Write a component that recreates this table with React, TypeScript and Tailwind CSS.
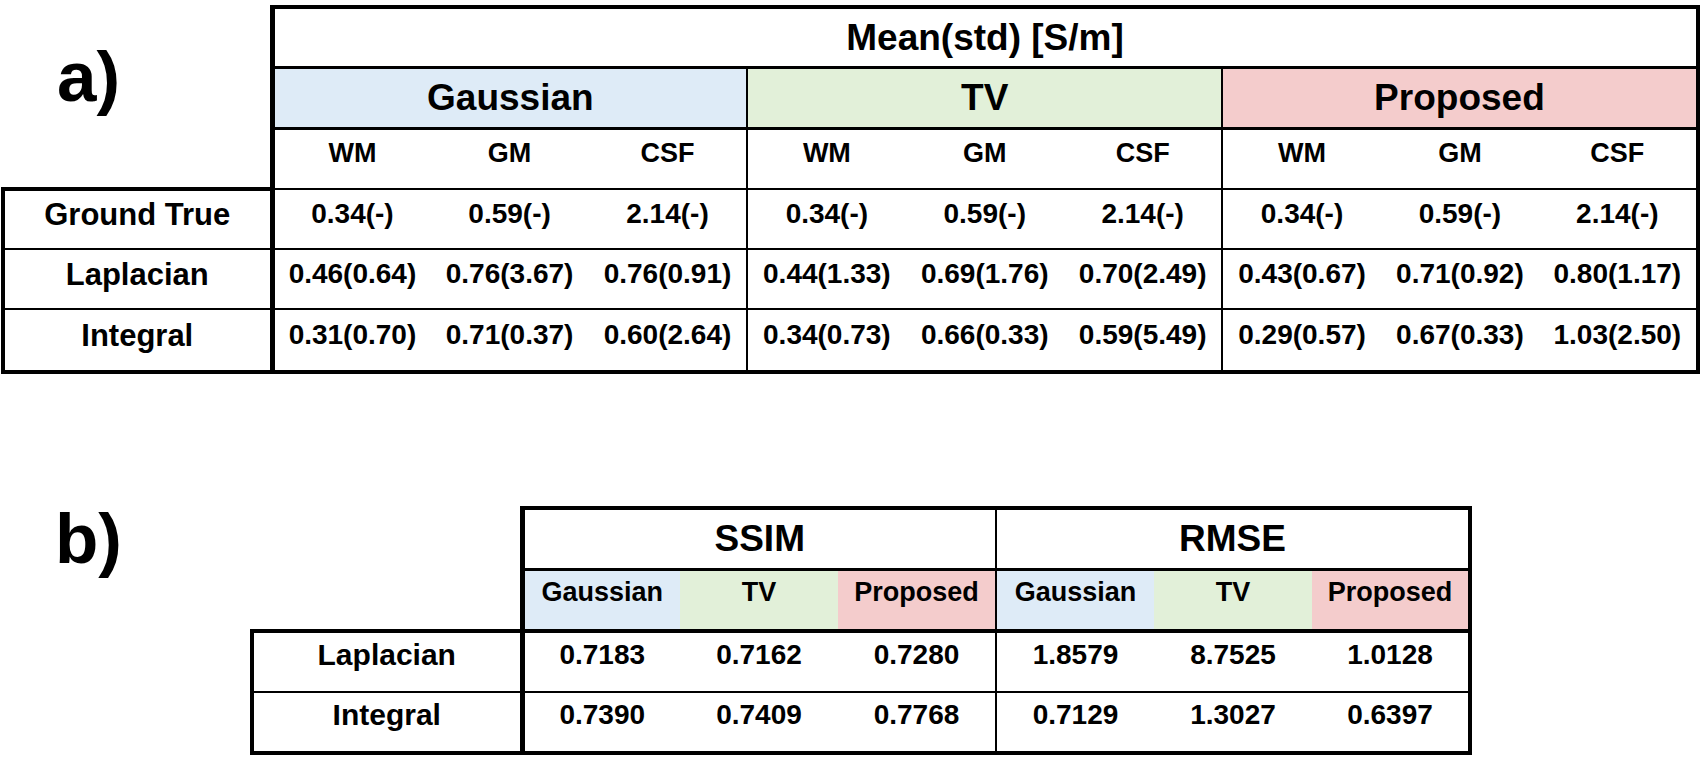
import React from "react";

const groupsA = [
  { name: "Gaussian", bg: "bg-[#deebf7]" },
  { name: "TV", bg: "bg-[#e2f0d9]" },
  { name: "Proposed", bg: "bg-[#f4cccc]" },
];

const rowsA = [
  { label: "Ground True", vals: ["0.34(-)", "0.59(-)", "2.14(-)", "0.34(-)", "0.59(-)", "2.14(-)", "0.34(-)", "0.59(-)", "2.14(-)"] },
  { label: "Laplacian", vals: ["0.46(0.64)", "0.76(3.67)", "0.76(0.91)", "0.44(1.33)", "0.69(1.76)", "0.70(2.49)", "0.43(0.67)", "0.71(0.92)", "0.80(1.17)"] },
  { label: "Integral", vals: ["0.31(0.70)", "0.71(0.37)", "0.60(2.64)", "0.34(0.73)", "0.66(0.33)", "0.59(5.49)", "0.29(0.57)", "0.67(0.33)", "1.03(2.50)"] },
];

const subA = ["WM", "GM", "CSF", "WM", "GM", "CSF", "WM", "GM", "CSF"];

const subB = [
  { name: "Gaussian", bg: "bg-[#deebf7]" },
  { name: "TV", bg: "bg-[#e2f0d9]" },
  { name: "Proposed", bg: "bg-[#f4cccc]" },
  { name: "Gaussian", bg: "bg-[#deebf7]" },
  { name: "TV", bg: "bg-[#e2f0d9]" },
  { name: "Proposed", bg: "bg-[#f4cccc]" },
];

const rowsB = [
  { label: "Laplacian", vals: ["0.7183", "0.7162", "0.7280", "1.8579", "8.7525", "1.0128"] },
  { label: "Integral", vals: ["0.7390", "0.7409", "0.7768", "0.7129", "1.3027", "0.6397"] },
];

function rightA(i: number) {
  if (i === 8) return "border-r-[4px]";
  if (i === 2 || i === 5) return "border-r-[2px]";
  return "";
}

function rightB(i: number) {
  if (i === 5) return "border-r-[4px]";
  if (i === 2) return "border-r-[2px]";
  return "";
}

export default function App() {
  return (
    <div className="w-[1702px] h-[759px] bg-white text-black overflow-hidden font-['Liberation_Sans',Arial,sans-serif] font-bold">
      {/* Panel a */}
      <table className="table-fixed border-collapse ml-[1px] mt-[5px] text-center">
        <colgroup>
          <col className="w-[269px]" />
          {subA.map((_, i) => (
            <col key={i} className="w-[158.4px]" />
          ))}
        </colgroup>
        <tbody>
          <tr className="h-[60px]">
            <td rowSpan={3} className="p-0 align-top text-left border-r-[5px] border-b-[4px] border-black">
              <div className="pl-[54px] pt-[34px] text-[71px] leading-none">a)</div>
            </td>
            <td colSpan={9} className="p-0 text-[37px] leading-none border-t-[4px] border-r-[4px] border-b-[3px] border-black">
              Mean(std) [S/m]
            </td>
          </tr>
          <tr className="h-[61px]">
            {groupsA.map((g, i) => (
              <td
                key={g.name}
                colSpan={3}
                className={`p-0 text-[37px] leading-none border-b-[3px] border-black ${g.bg} ${i === 2 ? "border-r-[4px]" : "border-r-[2px]"}`}
              >
                {g.name}
              </td>
            ))}
          </tr>
          <tr className="h-[61px]">
            {subA.map((s, i) => (
              <td key={i} className={`p-0 pb-[10px] text-[27px] leading-none border-b-[2px] border-black ${rightA(i)}`}>
                {s}
              </td>
            ))}
          </tr>
          {rowsA.map((r, ri) => {
            const bottom = ri === rowsA.length - 1 ? "border-b-[4px]" : "border-b-[2px]";
            const h = ri === rowsA.length - 1 ? "h-[63px]" : "h-[60px]";
            return (
              <tr key={r.label} className={h}>
                <td className={`p-0 pb-[10px] text-[31px] leading-none border-l-[4px] border-r-[5px] border-black ${ri === 0 ? "border-t-[4px]" : ""} ${bottom}`}>
                  {r.label}
                </td>
                {r.vals.map((v, i) => (
                  <td key={i} className={`p-0 pb-[10px] text-[28px] leading-none border-black ${bottom} ${rightA(i)}`}>
                    {v}
                  </td>
                ))}
              </tr>
            );
          })}
        </tbody>
      </table>

      {/* Panel b */}
      <div className="flex mt-[132px]">
        <div className="w-[250px] shrink-0 pl-[55px] text-[71px] leading-none -mt-[3px]">b)</div>
        <table className="table-fixed border-collapse text-center">
          <colgroup>
            <col className="w-[270px]" />
            {subB.map((_, i) => (
              <col key={i} className="w-[158px]" />
            ))}
          </colgroup>
          <tbody>
            <tr className="h-[61px]">
              <td rowSpan={2} className="p-0 border-r-[5px] border-b-[4px] border-black" />
              <td colSpan={3} className="p-0 text-[37px] leading-none border-t-[4px] border-r-[2px] border-b-[3px] border-black">
                SSIM
              </td>
              <td colSpan={3} className="p-0 text-[37px] leading-none border-t-[4px] border-r-[4px] border-b-[3px] border-black">
                RMSE
              </td>
            </tr>
            <tr className="h-[62px]">
              {subB.map((s, i) => (
                <td key={i} className={`p-0 pb-[14px] text-[27px] leading-none border-b-[4px] border-black ${s.bg} ${rightB(i)}`}>
                  {s.name}
                </td>
              ))}
            </tr>
            {rowsB.map((r, ri) => {
              const bottom = ri === rowsB.length - 1 ? "border-b-[4px]" : "border-b-[2px]";
              return (
                <tr key={r.label} className="h-[61px]">
                  <td className={`p-0 pb-[14px] text-[30px] leading-none border-l-[4px] border-r-[5px] border-black ${ri === 0 ? "border-t-[4px]" : ""} ${bottom}`}>
                    {r.label}
                  </td>
                  {r.vals.map((v, i) => (
                    <td key={i} className={`p-0 pb-[14px] text-[28px] leading-none border-black ${bottom} ${rightB(i)}`}>
                      {v}
                    </td>
                  ))}
                </tr>
              );
            })}
          </tbody>
        </table>
      </div>
    </div>
  );
}
